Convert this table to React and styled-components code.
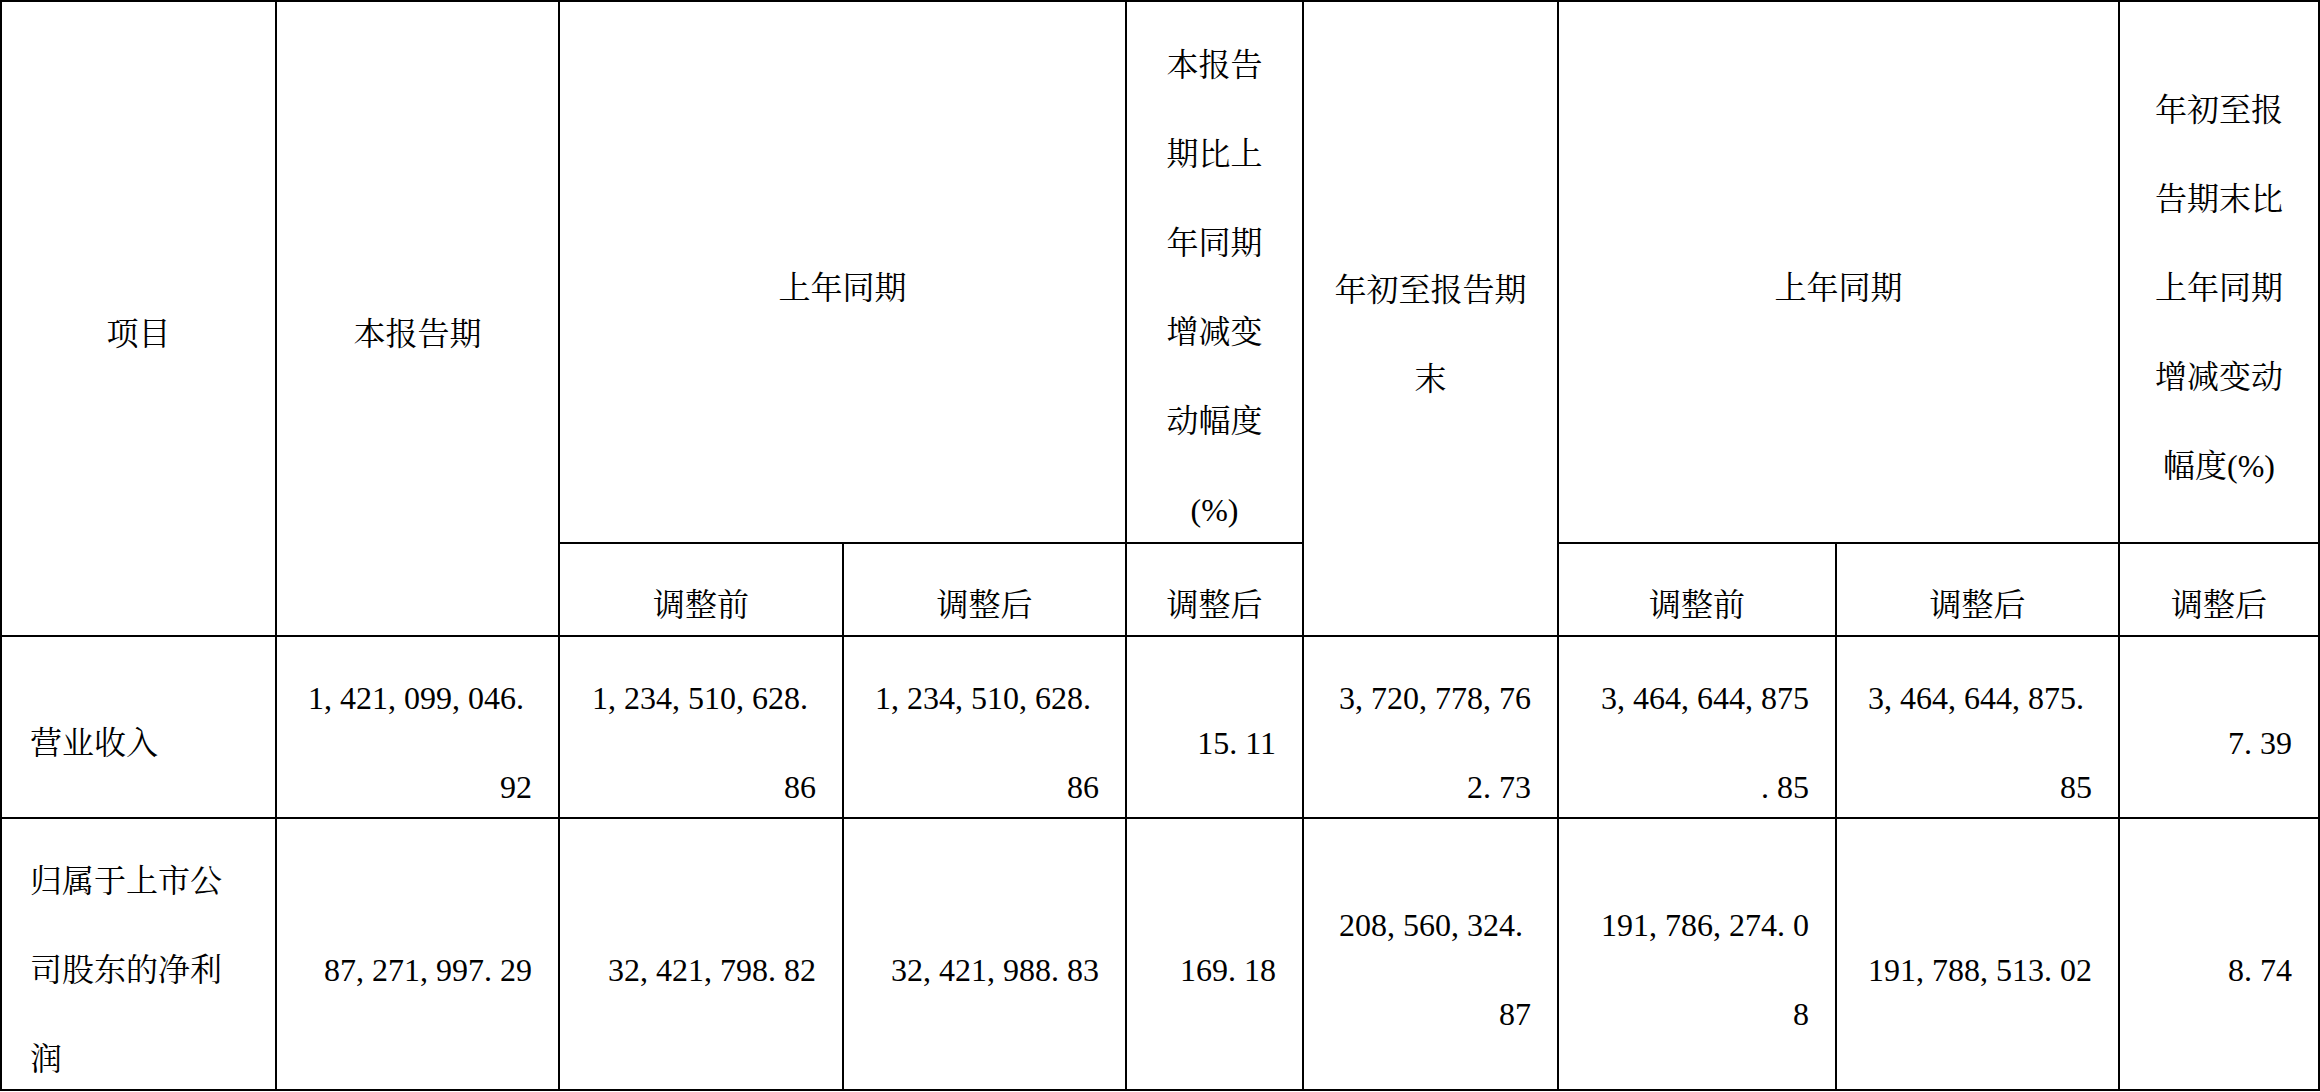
import React from "react";
import styled, { createGlobalStyle } from "styled-components";

const GlobalStyle = createGlobalStyle`
  html, body {
    margin: 0;
    padding: 0;
    background: #fff;
  }
`;

const Table = styled.div`
  display: grid;
  grid-template-columns: 273px 281px 282px 281px 175px 253px 276px 281px 198px;
  grid-template-rows: 540px 91px 180px 270px;
  gap: 2px;
  padding: 2px;
  width: 2320px;
  box-sizing: border-box;
  background: #000;
  font-family: "Liberation Serif", "Noto Serif CJK SC", "Noto Sans CJK SC", serif;
  font-size: 32px;
  color: #000;
`;

const Cell = styled.div`
  grid-column: ${(p) => p.col} / span ${(p) => p.colSpan || 1};
  grid-row: ${(p) => p.row} / span ${(p) => p.rowSpan || 1};
  display: flex;
  flex-direction: column;
  justify-content: center;
  background: #fff;
  box-sizing: border-box;
  padding-top: 32px;
  padding-left: ${(p) => (p.align === "left" ? "28px" : p.align === "right" ? "20px" : "0")};
  padding-right: ${(p) => (p.align === "right" ? "26px" : "0")};
  text-align: ${(p) => p.align || "center"};
  overflow: visible;
`;

const Line = styled.div`
  line-height: 89px;
  white-space: nowrap;
`;

const Punct = styled.span`
  margin-right: 0.25em;
`;

function Num({ text }) {
  return (
    <>
      {text.split("").map((ch, i) =>
        ch === "," || ch === "." ? <Punct key={i}>{ch}</Punct> : ch
      )}
    </>
  );
}

function Lines({ lines, num }) {
  return lines.map((l, i) => (
    <Line key={i}>{num ? <Num text={l} /> : l}</Line>
  ));
}

const rows = [
  {
    label: ["营业收入"],
    values: [
      ["1,421,099,046.", "92"],
      ["1,234,510,628.", "86"],
      ["1,234,510,628.", "86"],
      ["15.11"],
      ["3,720,778,76", "2.73"],
      ["3,464,644,875", ".85"],
      ["3,464,644,875.", "85"],
      ["7.39"],
    ],
  },
  {
    label: ["归属于上市公", "司股东的净利", "润"],
    values: [
      ["87,271,997.29"],
      ["32,421,798.82"],
      ["32,421,988.83"],
      ["169.18"],
      ["208,560,324.", "87"],
      ["191,786,274.0", "8"],
      ["191,788,513.02"],
      ["8.74"],
    ],
  },
];

export default function App() {
  return (
    <>
      <GlobalStyle />
      <Table>
        <Cell col={1} row={1} rowSpan={2}>
          <Line>项目</Line>
        </Cell>
        <Cell col={2} row={1} rowSpan={2}>
          <Line>本报告期</Line>
        </Cell>
        <Cell col={3} row={1} colSpan={2}>
          <Line>上年同期</Line>
        </Cell>
        <Cell col={5} row={1}>
          <Lines lines={["本报告", "期比上", "年同期", "增减变", "动幅度", "(%)"]} />
        </Cell>
        <Cell col={6} row={1} rowSpan={2}>
          <Lines lines={["年初至报告期", "末"]} />
        </Cell>
        <Cell col={7} row={1} colSpan={2}>
          <Line>上年同期</Line>
        </Cell>
        <Cell col={9} row={1}>
          <Lines lines={["年初至报", "告期末比", "上年同期", "增减变动", "幅度(%)"]} />
        </Cell>

        <Cell col={3} row={2}><Line>调整前</Line></Cell>
        <Cell col={4} row={2}><Line>调整后</Line></Cell>
        <Cell col={5} row={2}><Line>调整后</Line></Cell>
        <Cell col={7} row={2}><Line>调整前</Line></Cell>
        <Cell col={8} row={2}><Line>调整后</Line></Cell>
        <Cell col={9} row={2}><Line>调整后</Line></Cell>

        {rows.map((r, ri) => (
          <React.Fragment key={ri}>
            <Cell col={1} row={ri + 3} align="left">
              <Lines lines={r.label} />
            </Cell>
            {r.values.map((v, ci) => (
              <Cell key={ci} col={ci + 2} row={ri + 3} align="right">
                <Lines lines={v} num />
              </Cell>
            ))}
          </React.Fragment>
        ))}
      </Table>
    </>
  );
}
